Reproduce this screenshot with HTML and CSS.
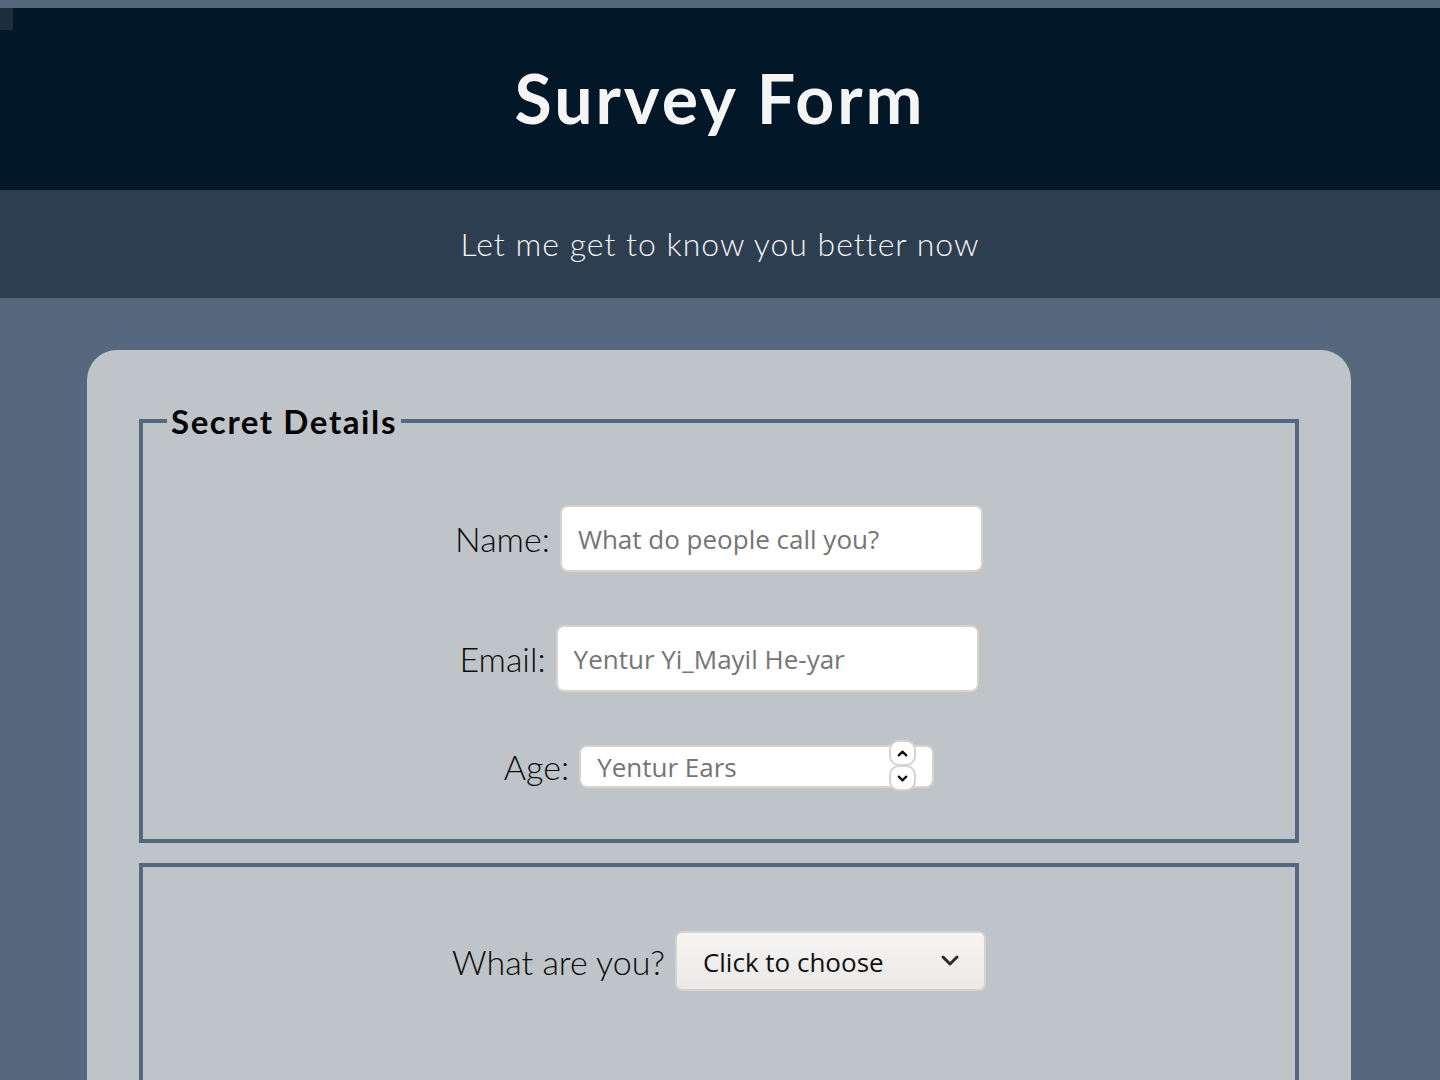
FILE: index.html
```html
<!DOCTYPE html>
<html lang="en">
<head>
<meta charset="utf-8">
<title>Survey Form</title>
<link rel="stylesheet" href="styles.css">
</head>
<body>
<div class="corner"></div>
<header class="hero">
  <h1 class="title">Survey Form</h1>
</header>
<div class="subband">
  <p class="subtitle">Let me get to know you better now</p>
</div>
<main class="card">
  <form class="form">
    <fieldset class="group group-first">
      <legend class="legend">Secret Details</legend>
      <div class="row row-name">
        <label class="label" for="name">Name:</label>
        <input class="field field-wide" id="name" type="text" placeholder="What do people call you?">
      </div>
      <div class="row row-email">
        <label class="label" for="email">Email:</label>
        <input class="field field-wide" id="email" type="text" placeholder="Yentur Yi_Mayil He-yar">
      </div>
      <div class="row row-age">
        <label class="label" for="age">Age:</label>
        <div class="numwrap">
          <input class="field field-age" id="age" type="text" placeholder="Yentur Ears">
          <span class="spin spin-up"><svg viewBox="0 0 16 16" width="15" height="15"><path d="M4 10 L8 6 L12 10" fill="none" stroke="#111" stroke-width="2.4" stroke-linecap="round" stroke-linejoin="round"/></svg></span>
          <span class="spin spin-down"><svg viewBox="0 0 16 16" width="15" height="15"><path d="M4 6 L8 10 L12 6" fill="none" stroke="#111" stroke-width="2.4" stroke-linecap="round" stroke-linejoin="round"/></svg></span>
        </div>
      </div>
    </fieldset>
    <fieldset class="group group-second">
      <div class="row row-select">
        <label class="label" for="kind">What are you?</label>
        <div class="select">
          <span class="select-text">Click to choose</span>
          <svg class="chev" viewBox="0 0 20 14" width="20" height="14"><path d="M3 3 L10 10 L17 3" fill="none" stroke="#2b2b2b" stroke-width="3" stroke-linecap="round" stroke-linejoin="round"/></svg>
        </div>
      </div>
    </fieldset>
  </form>
</main>
</body>
</html>
```

FILE: styles.css
```css
html, body {
  margin: 0;
  padding: 0;
}
body {
  background: #55687d;
  padding-top: 8px;
  font-family: "Lato", "Open Sans", sans-serif;
  position: relative;
  min-height: 1080px;
  box-sizing: border-box;
}
.corner {
  position: absolute;
  left: 0;
  top: 8px;
  width: 13px;
  height: 22px;
  background: #1d2d3a;
}
.hero {
  background: #021828;
  height: 182px;
  display: flex;
  align-items: center;
  justify-content: center;
}
.title {
  margin: 0;
  color: #f5f5f5;
  font-family: "Lato", sans-serif;
  font-weight: 700;
  font-size: 68px;
  letter-spacing: 3px;
  padding-bottom: 4px;
}
.subband {
  background: #2d3e50;
  height: 108px;
  display: flex;
  align-items: center;
  justify-content: center;
}
.subtitle {
  margin: 0;
  color: #f2f2f2;
  font-family: "Lato", sans-serif;
  font-weight: 300;
  font-size: 32px;
  letter-spacing: 1px;
  padding-bottom: 2px;
}
.card {
  width: 1264px;
  margin: 52px 0 0 87px;
  background: #bfc4c8;
  border-radius: 30px 30px 0 0;
  padding: 51px 52px 40px;
  box-sizing: border-box;
  min-height: 760px;
}
.form {
  display: flex;
  flex-direction: column;
  gap: 20px;
}
.group {
  margin: 0;
  border: 4px solid #55687d;
  padding: 0 24px;
  min-width: 0;
}
.legend {
  font-family: "Lato", sans-serif;
  font-weight: 700;
  font-size: 33px;
  letter-spacing: 1.6px;
  color: #050505;
  padding: 0 4px;
  margin-left: 0;
}
.group-first {
  padding-top: 64px;
  padding-bottom: 51px;
}
.group-second {
  padding-top: 64px;
  min-height: 300px;
}
.row {
  display: flex;
  align-items: center;
  justify-content: center;
  gap: 10px;
}
.row-email { margin-top: 53px; }
.row-age { margin-top: 53px; }
.label {
  font-family: "Lato", sans-serif;
  font-weight: 300;
  font-size: 34px;
  color: #0a0a0a;
}
.field {
  box-sizing: border-box;
  background: #fff;
  border: 2px solid #d8d3ce;
  border-radius: 8px;
  font-family: "Open Sans", sans-serif;
  font-size: 26px;
  color: #222;
  padding: 0 16px;
  outline: none;
}
.field::placeholder {
  color: #757575;
  opacity: 1;
}
.field-wide {
  width: 423px;
  height: 67px;
}
.numwrap {
  position: relative;
  display: flex;
}
.field-age {
  width: 355px;
  height: 43px;
}
.spin {
  position: absolute;
  right: 18px;
  width: 27px;
  height: 26px;
  box-sizing: border-box;
  background: #fff;
  border: 2px solid #d8d3ce;
  border-radius: 10px;
  display: flex;
  align-items: center;
  justify-content: center;
}
.spin-up { top: -5px; }
.spin-down { top: 20px; }
.select {
  box-sizing: border-box;
  width: 311px;
  height: 60px;
  border: 2px solid #d6d2cd;
  border-radius: 7px;
  background: linear-gradient(#f6f5f4, #ebe9e7);
  display: flex;
  align-items: center;
  justify-content: space-between;
  padding: 0 24px 0 26px;
}
.select-text {
  font-family: "Open Sans", sans-serif;
  font-size: 26px;
  color: #111;
  padding-top: 2px;
}
.chev {
  display: block;
}
```
